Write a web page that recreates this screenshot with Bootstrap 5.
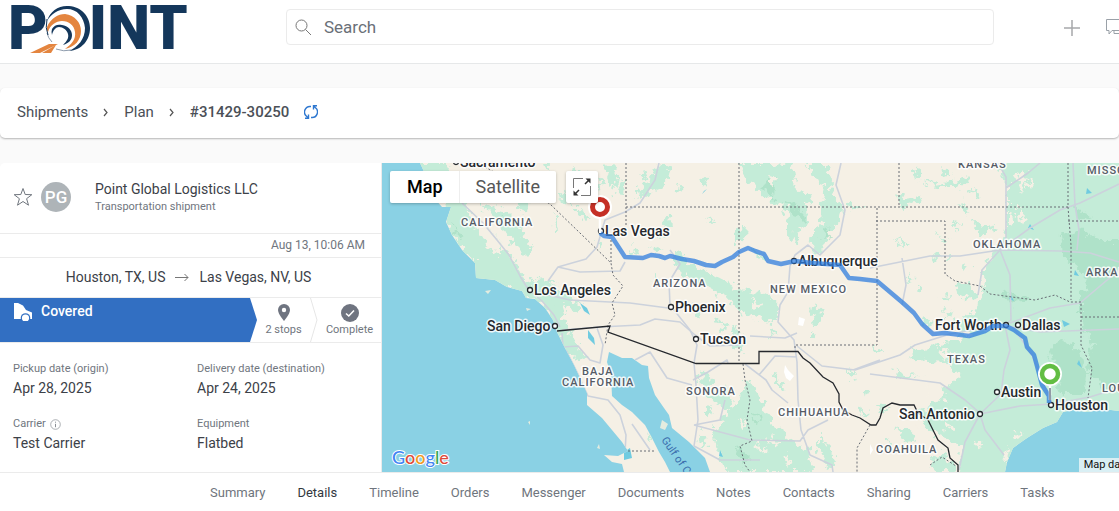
<!DOCTYPE html>
<html lang="en">
<head>
<meta charset="utf-8">
<meta name="viewport" content="width=device-width, initial-scale=1">
<title>Shipment #31429-30250</title>
<link href="https://cdn.jsdelivr.net/npm/bootstrap@5.3.0/dist/css/bootstrap.min.css" rel="stylesheet">
<style>
  body { font-family: Roboto, Arial, sans-serif; font-size: 14px; line-height: 20px; color: #3c4148; background: #fafafa; overflow-x: hidden; }
  a { color: inherit; text-decoration: none; }
  .topbar { height: 64px; border-bottom: 1px solid #e6e8e9; }
  .brand { width: 286px; padding-left: 8px; font-size: 61px; line-height: 56px; font-weight: 900; color: #14375b; }
  .brand svg { margin: 0 -3px 0 -5px; }
  .searchbox { height: 36px; margin-top: 9px; border: 1px solid #ebebeb; border-radius: 4px; }
  .searchbox input { border: 0; outline: 0; background: none; font-size: 17px; color: #5f6368; }
  .searchbox input::placeholder { color: #6a7078; opacity: 1; }
  .actions { width: 125px; padding-left: 70px; gap: 26px; overflow: hidden; }
  .icon-btn { border: 0; background: none; padding: 0; line-height: 0; flex: none; }
  .crumbs { height: 50px; margin: 24px 0 25px; padding: 0 0 2px 17px; gap: 15px; border-radius: 5px; box-shadow: 0 1px 2px rgba(0,0,0,.28); font-size: 15px; color: #4b5057; }
  .crumbs svg { flex: none; }
  .current { font-weight: 500; }
  .side { width: 382px; flex: none; border-right: 1px solid #ebebeb; border-top-left-radius: 5px; }
  .rule { border-bottom: 1px solid #ebebeb; }
  .owner { height: 71px; padding: 0 0 2px 13px; }
  .stamp { height: 24px; font-size: 12px; padding-top: 1px; }
  .lane { height: 40px; gap: 10px; padding: 0 4px 2px 0; }
  .muted { color: #70767e; }
  .tiny { font-size: 11px; line-height: 16px; }
  .avatar { width: 30px; height: 30px; background: #aeb4b8; color: #fff; font-size: 17px; font-weight: 500; }
  .steps { height: 45px; }
  .step-now { width: 257px; background: #326fc2; color: #fff; font-weight: 500; padding: 3px 13px; gap: 9px; clip-path: polygon(0 0, 250px 0, 100% 50%, 250px 100%, 0 100%); }
  .step-stops { width: 53px; }
  .facts { padding: 18px 13px; row-gap: 17px; display: grid; grid-template-columns: 184px 1fr; }
  .facts dt { font-weight: 400; }
  .facts dd { margin: 0; line-height: 22px; }
  .map-pane { min-width: 0; background: #8ad1e4; overflow: hidden; }
  .map-tools { top: 8px; left: 8px; gap: 10px; }
  .map-tools button { border: 0; background: #fff; height: 32px; font-size: 18px; color: #565656; padding: 0 17px; }
  .map-tools .picked { color: #000; font-weight: 500; padding-right: 16px; border-right: 1px solid #eee; }
  .map-tools .picked + button { padding: 0 16px; }
  .map-tools .box { border-radius: 2px; box-shadow: 0 1px 3px rgba(0,0,0,.25); overflow: hidden; }
  .map-tools .box-icon { padding: 0 7px; line-height: 0; }
  .map-credit { right: -52px; bottom: 0; background: rgba(240,247,249,.78); color: #111; padding: 0 5px; font-size: 11px; line-height: 14px; white-space: nowrap; }
  .city { font: 500 14px Roboto, sans-serif; fill: #25292e; stroke: #fff; stroke-width: 3px; stroke-opacity: .85; paint-order: stroke; stroke-linejoin: round; }
  .region { font: 500 11px Roboto, sans-serif; letter-spacing: 1px; fill: #555b66; stroke: #fff; stroke-width: 3px; stroke-opacity: .85; paint-order: stroke; stroke-linejoin: round; }
  .tabs { padding-left: 194px; height: 39px; font-size: 13px; border-top: 1px solid #ebebeb; overflow: hidden; }
  .tabs .nav-link { padding: 0 16px; line-height: 40px; color: #6f757d; white-space: nowrap; }
  .tabs .nav-link.active { color: #33383e; }
</style>
</head>
<body>
<header class="topbar bg-white d-flex align-items-start">
  <a class="brand d-flex align-items-start flex-shrink-0" href="#" aria-label="Point">
    <span>P</span>
    <svg width="49" height="56" viewBox="41 0 49 56" overflow="visible" aria-hidden="true">
      <path fill="#14375b" d="M45 21C48 11 57 5 67 6C80 7 88 17 88 28C88 40 80 50 67 51C76 47 83 39 83 28C82 17 75 9 65 9C56 9 49 14 45 21Z"/>
      <path fill="#e4853f" d="M45 27C49 18 56 14 63 14C73 15 79 23 79 31C79 40 73 47 63 49C70 44 74 39 73 32C72 25 67 21 60 21C54 21 48 25 46 32Q44 30 45 27Z"/>
      <path fill="#14375b" d="M50 29C52 25 56 24 60 25C66 26 70 30 70 35C70 40 67 43 61 45C65 41 67 38 66 34C65 30 61 27 57 27C54 27 51 30 50 35Q49 32 50 29Z"/>
      <path fill="#e4853f" d="M28 53L47 44H56L38 53ZM40 53L54 45L49 53Z"/>
      <path fill="none" stroke="#8e9cad" stroke-width="1" d="M45 33Q46 38 50 42M54 49Q62 52 69 50"/>
      <path fill="none" stroke="#14375b" stroke-width="1" d="M45 19Q43 28 46 35"/>
    </svg>
    <span>INT</span>
  </a>
  <label class="searchbox d-flex align-items-center flex-grow-1 px-2 bg-white">
    <svg width="17" height="17" viewBox="0 0 17 17" fill="none" stroke="#777" stroke-width="1" aria-hidden="true"><circle cx="6.500" cy="6.500" r="5.500"/><path d="M10.500 10.500L16 16"/></svg>
    <input class="flex-grow-1 ms-2 ps-1" type="search" placeholder="Search" aria-label="Search">
  </label>
  <div class="actions d-flex align-items-center mt-3">
    <button class="icon-btn" type="button" aria-label="Add"><svg width="16" height="24" viewBox="0 0 16 24" stroke="#a6a8ab" stroke-width="1.500"><path d="M0 12H16M8 4V20"/></svg></button>
    <button class="icon-btn" type="button" aria-label="Messages"><svg width="22" height="22" viewBox="0 0 22 22" fill="none" stroke="#9aa1a8"><path d="M18.500 13V2.500H.500V13.500H3V17L6 13.500H18.500M8 14V16.500H18L21 19V8"/></svg></button>
  </div>
</header>

<nav class="crumbs bg-white d-flex align-items-center" aria-label="breadcrumb">
  <a href="#">Shipments</a>
  <svg width="6" height="10" viewBox="0 0 6 10" fill="none" stroke="#555" stroke-width="1.200"><path d="M1 2L4 5.500L1 9"/></svg>
  <a href="#">Plan</a>
  <svg width="6" height="10" viewBox="0 0 6 10" fill="none" stroke="#555" stroke-width="1.200"><path d="M1 2L4 5.500L1 9"/></svg>
  <span class="current">#31429-30250</span>
  <button class="icon-btn" type="button" aria-label="Refresh"><svg width="14" height="16" viewBox="0 0 14 16" fill="none" stroke="#2f78d0" stroke-width="1.400"><path d="M7 2.500H6.500A5.500 5.500 0 0 0 2.500 12.200L4.500 14M7 13.500H7.500A5.500 5.500 0 0 0 11.500 3.800L9.500 2M13 1.700H9.500V5.500M1 14.300H4.500V10.500"/></svg></button>
</nav>

<main class="d-flex">
  <section class="side bg-white">
    <div class="owner rule d-flex align-items-center">
      <button class="icon-btn" type="button" aria-label="Favourite"><svg width="20" height="20" viewBox="0 0 20 20" fill="none" stroke="#70767e"><path d="M10 1.500L12.200 7.500L18.800 7.700L13.600 11.700L15.500 18.200L10 14.500L4.500 18.200L6.400 11.700L1.200 7.700L7.800 7.500Z"/></svg></button>
      <span class="avatar rounded-circle d-flex align-items-center justify-content-center ms-2">PG</span>
      <div class="ms-4">
        <div>Point Global Logistics LLC</div>
        <div class="tiny muted">Transportation shipment</div>
      </div>
    </div>
    <div class="stamp rule muted text-end pe-3">Aug 13, 10:06 AM</div>
    <div class="lane rule d-flex align-items-center justify-content-center">
      <span>Houston, TX, US</span>
      <svg width="14" height="10" viewBox="0 0 14 10" fill="none" stroke="#777"><path d="M0 5.500H13M9.500 2L13 5.500L9.500 9"/></svg>
      <span>Las Vegas, NV, US</span>
    </div>
    <div class="steps rule d-flex">
      <div class="step-now d-flex align-items-start">
        <svg width="19" height="20" viewBox="0 0 19 20"><path fill="#fff" d="M1 2H5L10 4.500L13 9L19 11.500V18H1Z"/><circle cx="12.500" cy="17" r="4.800" fill="#326fc2"/><circle cx="12.500" cy="17" r="3.600" fill="#fff"/></svg>
        <span>Covered</span>
      </div>
      <div class="step-stops tiny muted text-center">
        <svg class="mt-1" width="14" height="20" viewBox="0 0 14 20"><path fill="#6f7480" d="M7 2A6 6 0 0 0 1 8C1 12 7 19 7 19S13 12 13 8A6 6 0 0 0 7 2Z"/><circle cx="7" cy="8" r="2.200" fill="#fff"/></svg>
        <div>2 stops</div>
      </div>
      <svg width="8" height="44" viewBox="0 0 8 44" fill="none" stroke="#e6e6e6"><path d="M.500 0L7 22L.500 44"/></svg>
      <div class="tiny muted text-center flex-grow-1">
        <svg class="mt-1" width="20" height="20" viewBox="0 0 20 20"><circle cx="10" cy="11" r="9" fill="#6f7480"/><path d="M6 11.500L8.800 14L14 8.500" fill="none" stroke="#fff" stroke-width="1.600"/></svg>
        <div>Complete</div>
      </div>
    </div>
    <dl class="facts mb-0">
      <div><dt class="tiny muted">Pickup date (origin)</dt><dd>Apr 28, 2025</dd></div>
      <div><dt class="tiny muted">Delivery date (destination)</dt><dd>Apr 24, 2025</dd></div>
      <div><dt class="tiny muted d-flex align-items-center gap-1">Carrier <svg width="11" height="11" viewBox="0 0 11 11" fill="none" stroke="#8a8f95"><circle cx="5.500" cy="5.500" r="4.800" stroke-width=".7"/><path d="M5.500 4.800V8.200M5.500 2.700V3.700"/></svg></dt><dd>Test Carrier</dd></div>
      <div><dt class="tiny muted">Equipment</dt><dd>Flatbed</dd></div>
    </dl>
  </section>

  <section class="map-pane flex-grow-1 position-relative">
    <svg class="position-absolute top-0 start-0 w-100 h-100" viewBox="382 163 737 309" preserveAspectRatio="xMinYMin slice" role="img" aria-label="Route map">
      <defs>
        <filter id="rough" x="-5%" y="-5%" width="110%" height="110%"><feTurbulence type="fractalNoise" baseFrequency=".14" numOctaves="3" seed="4"/><feDisplacementMap in="SourceGraphic" scale="16" xChannelSelector="R" yChannelSelector="G"/></filter>
        <clipPath id="shore"><path id="ground" d="M420 163L427 178L435 199L442 207L451 207L446 222L452 235L462 250L475 263L476 278L495 280L507 287L522 291L526 298L535 299L545 308L553 320L557 332L565 348L574 365L582 382L587 393L587 405L602 418L612 430L622 442L628 451L618 456L604 455L612 462L622 464L624 472H670L665 462L659 452L652 438L645 425L632 412L622 405L612 396L611 375L607 362L609 352L622 358L632 358L642 365L648 366L649 378L655 395L664 408L669 415L672 428L689 442L705 458L710 472H1005L1007 462L1013 448L1027 438L1043 428L1057 422L1063 412L1073 410L1087 412L1103 409L1119 411V163Z"/></clipPath>
      </defs>
      <rect x="382" y="163" width="2400" height="2400" fill="#8ad1e4"/>
      <use href="#ground" fill="#f5f0e5"/>
      <g clip-path="url(#shore)">
        <g filter="url(#rough)" fill="#c4ecd8">
          <path d="M415 163H446L450 180L465 195L470 205L480 205L478 213L490 230L500 240L508 250L516 268L526 280L540 287L554 295L563 315L570 332L578 350L590 358L582 362L565 350L550 312L535 301L510 290L490 282L473 280L474 262L450 235L442 200L428 185Z"/>
          <path d="M465 195L480 205L485 225L500 240L510 252L502 258L490 248L478 230L470 215Z" fill="#f5f0e5"/>
          <path d="M480 203L505 210L520 225L530 245L528 258L515 245L500 225ZM500 245L515 262L510 270L500 258ZM515 203L530 200L525 215ZM530 280L545 278L570 295L582 305L575 312L550 298ZM546 290L562 304L566 325L556 316Z"/>
          <path d="M545 163H550L548 180ZM605 170L612 163L620 180L612 186ZM614 187L626 180L625 197L616 196ZM635 196L650 180L658 163L670 168L667 185L650 192ZM572 203L582 210L590 222L580 218ZM553 210L560 230L555 228ZM660 222L670 214L671 224L662 228ZM641 230L648 238L642 240ZM655 236L668 234L660 240ZM706 217L720 224L708 222ZM735 232L745 227L744 240L732 244Z"/>
          <path d="M742 163H765L775 166L793 163L796 180L793 188L812 198L807 208L808 222L795 232L800 240L790 242L788 222L785 208L772 200L765 198L752 184L745 178Z"/>
          <path d="M805 163L825 163L832 180L830 192L842 207L840 225L828 232L825 250L812 252L808 240L820 222L821 203L826 190L815 175ZM849 204L865 208L852 210Z"/>
          <path d="M672 250L682 254L690 265L705 270L718 278L740 290L760 293L773 300L780 308L775 318L768 322L752 318L738 310L725 296L708 286L695 280L682 272L672 262ZM745 245L765 256L760 260ZM815 304L822 310L820 324L811 324ZM734 345L744 344L740 354Z"/>
          <path d="M700 370L712 375L714 395L725 385L733 400L730 415L742 390L748 380L762 400L765 412L778 428L793 440L808 450L812 472H728L716 450L712 430L730 412L712 400L702 388ZM772 372L782 385L790 392L776 385Z"/>
          <path d="M992 155L1007 183V232L993 250L984 270L985 292L974 312L955 323L960 338L935 346L920 351L910 343L912 360L948 362L960 377L945 388L942 400L916 413L929 432L943 437L960 448L963 482H1130V153Z"/>
        </g>
        <g filter="url(#rough)" fill="#c4ecd8">
          <path d="M895 195L915 203L902 208ZM905 198L920 196L922 202L910 206ZM920 180L935 184L960 180L970 176L960 188L930 185ZM952 227L958 220L956 230ZM962 200L970 214L964 212ZM972 222L995 228L982 236ZM898 238L908 244L903 248ZM936 235L948 238L942 242ZM948 253L955 260L950 262ZM918 287L926 292L920 292ZM940 297L950 296L948 303ZM955 285L968 282L976 296L960 300ZM872 343L882 354L876 353ZM850 370L857 378L850 380ZM862 390L870 392L864 400ZM893 367L905 375L920 376L900 380ZM878 402L890 410L880 412ZM896 430L912 427L916 440L906 442ZM888 440L897 452L885 450ZM820 432L836 462L830 470L820 450ZM684 462L695 470L690 472ZM930 460L945 450L955 472H936Z"/>
          <path d="M572 165L580 172L574 184ZM586 168L592 180L588 190ZM596 174L602 182L598 192ZM560 190L570 198L562 202ZM640 172L648 170L644 182ZM636 186L642 192L636 198ZM700 180L712 176L706 188ZM676 184L684 190L678 192ZM596 240L604 246L598 250ZM650 246L664 250L656 256ZM632 246L640 252L634 254ZM690 305L706 312L698 316ZM714 318L730 326L718 328ZM734 326L744 332L736 338ZM652 274L660 280L654 282ZM812 330L818 336L812 340ZM706 404L714 412L706 418ZM698 432L708 440L700 446ZM770 330L778 334L772 338ZM930 254L940 258L932 262ZM944 310L954 314L946 320ZM924 318L936 322L926 326ZM962 262L970 268L964 272ZM906 274L914 280L908 282ZM912 168L924 172L916 178ZM940 168L952 172L944 176ZM970 190L982 196L974 200ZM636 388L642 394L638 396ZM648 432L654 440L650 442ZM860 408L868 414L862 418Z"/>
        </g>
        <g filter="url(#rough)" fill="#a9dfc4" opacity=".75">
          <path d="M1060 235L1080 230L1100 240H1130V300L1090 290L1080 270L1062 255ZM1080 290L1130 286V390L1105 392L1088 370L1092 345L1080 320ZM1050 348L1065 340L1080 352L1086 370L1085 395L1062 395L1054 375ZM1002 290L1030 300L1010 305ZM785 204L800 208L805 220L795 218ZM825 225L832 238L822 242ZM735 444L750 456L742 464ZM762 188L776 175L774 200ZM752 412L760 416L758 424ZM1070 205L1090 215L1078 220ZM500 214L512 224L504 222ZM454 222L464 240L458 238Z"/>
        </g>
        <g filter="url(#rough)" fill="#f5f0e5">
          <path d="M1016 175L1028 170L1022 195ZM1018 205L1026 215L1020 225ZM1010 210L1016 220L1010 222ZM1015 432L1025 436L1013 440ZM900 410L925 420L916 435L905 425ZM1004 454L1010 448L1008 465Z"/>
          <path d="M770 173L778 178L772 190ZM738 418L748 426L740 430ZM756 440L766 450L758 452ZM770 434L780 444L772 446ZM784 452L794 462L786 464ZM752 300L762 306L754 308ZM938 348L956 352L944 358ZM926 384L940 390L930 396ZM964 330L974 334L966 340ZM976 440L984 446L978 450ZM944 420L954 426L946 430ZM1026 178L1032 184L1028 190Z"/>
        </g>
        <path fill="#fff" d="M799 317L805 319L803 326L798 325ZM785 365L788 370L794 376L790 381L786 378L784 372ZM870 444L873 450L870 455Z"/>
        <path fill="#70cbe0" d="M580 303L587 308L590 315L584 311ZM588 330L594 338L595 345L588 338ZM624 452L630 448L632 458L624 460ZM1087 188L1092 193L1086 194ZM1030 224L1034 230L1028 228ZM704 191L707 189L702 194ZM1075 270L1079 276L1074 275ZM1011 295L1014 301L1009 299ZM1062 320L1070 324L1064 327ZM1079 360L1082 368L1077 364ZM720 450L723 457L719 456Z"/>
        <g fill="none" stroke="#ccd2dc" stroke-width="1.600" stroke-linejoin="round">
          <path d="M462 203L483 223L497 240L509 255L520 276L528 289L542 301L554 315L560 327M548 281L558 267L586 259L597 247L605 220L625 212L640 203L655 180L659 163M558 267L580 272L620 271L625 262M548 295L570 300L630 303L668 308M562 330L600 327L640 325L655 319L680 322L695 335L710 346L740 345M750 336L785 338L797 333"/>
          <path d="M670 305L669 282L680 264L670 250M670 305L690 330L697 345L694 363L696 385L698 420L694 446L720 460L760 460"/>
          <path d="M841 163L836 185L845 210L840 235L830 245L820 255L808 245L795 255L790 266L788 292L780 305L778 322L794 340L797 362L798 400L801 430L810 455L832 465L833 472M797 346L822 366L855 370L870 365L900 355L915 345L950 334L1000 325L1040 332L1119 329M853 370L880 360M797 357L775 356L759 375M745 364L766 380L772 390L788 403M870 374L940 383L965 400L981 414M870 268L930 256L960 256L1000 250L1060 251L1090 253L1119 262M902 258L906 285L902 305M1000 250L1010 275L1011 320L1005 325L1010 350L1004 370L1001 394L980 414L965 442L959 470M1000 250L982 270L978 295M998 163L1006 177V238L1000 250L1030 228L1060 210L1080 203L1119 184M1006 188L1028 173L1040 163M1073 163L1075 205L1079 230L1077 250M980 414L1020 406L1052 404L1090 397L1119 388M1010 323L1050 308L1080 303L1119 270M1052 404L1032 355L1013 327M980 414L985 430L1004 455M562 333L563 347L578 346L590 360L600 363L603 345L597 328M566 350L577 372L588 396L608 400L620 415L626 435L625 452M632 424L650 450M635 360L650 352L667 378L692 385M693 380L708 372L727 360L728 363M694 425L720 420L725 400M694 425L750 440L800 441L808 430L828 420"/>
        </g>
        <g fill="none" stroke="#686d75" stroke-width="1" stroke-dasharray="2 2">
          <path d="M478 163L550 204L611 263L613 275L623 286L612 303L615 315L608 325L605 345M626 163V225M611 240V263M626 207H1068V163M739 163V363M877 208V345H795V350M899 163V207M876 221H945V274L955 281L980 286L990 294L1012 297L1035 300L1055 295L1070 302H1081V345L1092 368L1088 398M1068 207L1071 245V300M1068 221H1119M1081 317H1119M743 364L745 380L750 400L747 420L752 441L740 446L745 465L750 472M620 451H655M870 425L857 448V472M930 465L942 457L956 466"/>
        </g>
        <path d="M557 331L610 326L608 332L696 363.500H759V351.500H798L803 358L810 363L823 377L833 383L839 394V402L843 410L852 415L860 418L871 425L876 425L880 418L883 408L892 403L900 405L914 405L918 413L928 420L934 432L938 440L948 448L950 458L958 465V472" fill="none" stroke="#26292e" stroke-width="1.300"/>
      </g>
      <path d="M485 291L491 290L488 294ZM526 308L531 309L527 311ZM597 448L599 444L600 449ZM528 422L530 421V425ZM662 420L668 424L665 430L660 428Z" fill="#e4ecdf"/>
      <g class="city">
        <text x="460" y="167">Sacramento</text><text x="605" y="236">Las Vegas</text><text x="534" y="295">Los Angeles</text><text x="487" y="331">San Diego</text><text x="675" y="312">Phoenix</text><text x="700" y="344">Tucson</text><text x="798" y="266">Albuquerque</text><text x="935" y="330">Fort Worth</text><text x="1022" y="330">Dallas</text><text x="1001" y="397">Austin</text><text x="899" y="419">San Antonio</text><text x="1055" y="410">Houston</text>
      </g>
      <g class="region">
        <text x="461" y="226">CALIFORNIA</text><text x="653" y="287">ARIZONA</text><text x="770" y="293">NEW MEXICO</text><text x="973" y="248">OKLAHOMA</text><text x="958" y="168">KANSAS</text><text x="1087" y="174">MISSOURI</text><text x="1086" y="276">ARKANSAS</text><text x="947" y="363">TEXAS</text><text x="1102" y="392">LOUISIANA</text><text x="686" y="395">SONORA</text><text x="778" y="416">CHIHUAHUA</text><text x="876" y="453">COAHUILA</text><text x="582" y="375">BAJA</text><text x="562" y="386">CALIFORNIA</text>
      </g>
      <text transform="translate(661 440) rotate(55)" font-size="11" fill="#3b6fae">Gulf of California</text>
      <g fill="#fff" stroke="#25292e" stroke-width="1.300"><circle cx="456" cy="162" r="2.500"/><circle cx="601" cy="231" r="2.500"/><circle cx="530" cy="290" r="2.500"/><circle cx="555" cy="326" r="2.500"/><circle cx="671" cy="307" r="2.500"/><circle cx="696" cy="339" r="2.500"/><circle cx="794" cy="261" r="2.500"/><circle cx="1006" cy="325" r="2.500"/><circle cx="1018" cy="325" r="2.500"/><circle cx="997" cy="392" r="2.500"/><circle cx="980" cy="414" r="2.500"/><circle cx="1051" cy="405" r="2.500"/></g>
      <path d="M600 233L604 236L612 237L625 257L643 258L651 255L659 256L665 258L670 256L682 259L694 261L706 265L715 266L722 262L733 257L739 252L748 248L755 251L764 254L768 261L781 264L795 261L812 263L840 265L849 278L860 279L877 281L890 292L903 303L914 313L922 324L933 334L945 333L969 336L985 331L993 326L1006 326L1014 330L1025 338L1027 347L1034 355L1037 366L1042 385L1049 396V403" fill="none" stroke="#2f7ddd" stroke-opacity=".75" stroke-width="4.500" stroke-linejoin="round"/>
      <path d="M600 218V233M1050 385V400" stroke="#fff" stroke-width="2.500"/>
      <path d="M1050 388V400" stroke="#26384e" stroke-width="1"/>
      <circle cx="600" cy="207" r="12" fill="#fff"/><circle cx="600" cy="207" r="7.500" fill="none" stroke="#c53026" stroke-width="5"/>
      <circle cx="1050" cy="374" r="12" fill="#fff"/><circle cx="1050" cy="374" r="8" fill="none" stroke="#62bd43" stroke-width="4.500"/>
      <text x="392" y="464" font-family="Lato, sans-serif" font-size="18" font-weight="500" stroke="#fff" stroke-width="2" paint-order="stroke" aria-label="Google"><tspan fill="#4285f4">G</tspan><tspan fill="#dd4b39">o</tspan><tspan fill="#ef9a22">o</tspan><tspan fill="#4285f4">g</tspan><tspan fill="#34a853">l</tspan><tspan fill="#dd4b39">e</tspan></text>
    </svg>
    <div class="map-tools position-absolute d-flex">
      <div class="box d-flex"><button class="picked" type="button">Map</button><button type="button">Satellite</button></div>
      <button class="box box-icon" type="button" aria-label="Full screen"><svg width="18" height="18" viewBox="0 0 18 18" fill="none" stroke="#777"><path d="M10 .500H.500V10M8 17.500H17.500V8"/><path d="M12 6L16 2M6 12L2 16" stroke="#333" stroke-width="1.500"/><path d="M12.500 .500H17.500V5.500ZM.500 12.500V17.500H5.500Z" fill="#333" stroke="none"/></svg></button>
    </div>
    <div class="map-credit position-absolute">Map data ©2025</div>
  </section>
</main>

<nav class="tabs bg-white nav flex-nowrap" aria-label="Shipment sections">
  <a class="nav-link" href="#">Summary</a><a class="nav-link active" href="#" aria-current="page">Details</a><a class="nav-link" href="#">Timeline</a><a class="nav-link" href="#">Orders</a><a class="nav-link" href="#">Messenger</a><a class="nav-link" href="#">Documents</a><a class="nav-link" href="#">Notes</a><a class="nav-link" href="#">Contacts</a><a class="nav-link" href="#">Sharing</a><a class="nav-link" href="#">Carriers</a><a class="nav-link" href="#">Tasks</a>
</nav>
<script src="https://cdn.jsdelivr.net/npm/bootstrap@5.3.0/dist/js/bootstrap.bundle.min.js"></script>
</body>
</html>
